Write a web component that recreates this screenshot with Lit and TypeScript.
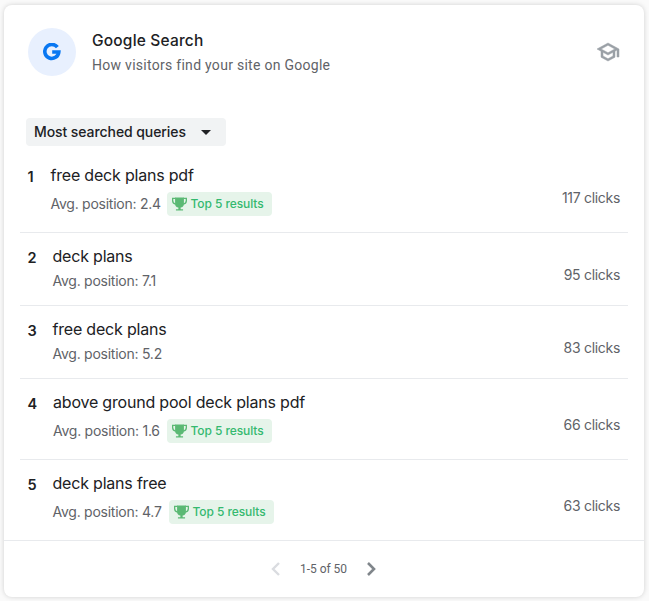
import { LitElement, html, css, svg } from "lit";
import { customElement } from "lit/decorators.js";

interface Query {
  title: string;
  position: string;
  clicks: number;
  top: boolean;
  indent: number;
  gap: number;
}

const QUERIES: Query[] = [
  { title: "free deck plans pdf", position: "2.4", clicks: 117, top: true, indent: 23, gap: 116 },
  { title: "deck plans", position: "7.1", clicks: 95, top: false, indent: 25, gap: 0 },
  { title: "free deck plans", position: "5.2", clicks: 83, top: false, indent: 25, gap: 0 },
  { title: "above ground pool deck plans pdf", position: "1.6", clicks: 66, top: true, indent: 25.5, gap: 113.5 },
  { title: "deck plans free", position: "4.7", clicks: 63, top: true, indent: 25, gap: 116 },
];

const trophy = svg`<path d="M3.300 0h9.400v7.200a4.500 4 0 0 1-3.500 3.600v1.800h2.600V14H4.200v-1.400h2.600v-1.800a4.500 4 0 0 1-3.500-3.600z"/><path d="M4 1H.7v2.500c0 2 1.300 3.300 3.300 3.600M12 1h3.300v2.500c0 2-1.300 3.300-3.300 3.600" fill="none" stroke="#5bb974" stroke-width="1.400"/>`;

@customElement("app-root")
export class AppRoot extends LitElement {
  static styles = css`
    :host { display: block; box-sizing: border-box; height: 601px; padding: 5px 5px 4px 4px; background: #fafafa;
      font-family: Inter, "Liberation Sans", sans-serif; color: #202124; overflow: hidden; }
    .card { display: flex; flex-direction: column; height: 592px; background: #fff; border-radius: 8px;
      box-shadow: 0 0 5px rgba(0, 0, 0, .17); white-space: nowrap; }
    header { display: flex; align-items: center; height: 48px; padding: 23px 24px 0; }
    .logo { width: 48px; height: 48px; border-radius: 50%; background: #e8f0fe; display: grid; place-items: center; margin-right: 16px; }
    .heading { flex: 1; padding-top: 2px; }
    .name { font-size: 15.500px; font-weight: 500; line-height: 24px; letter-spacing: .18px; }
    .desc { font: 14px/24px Roboto, sans-serif; letter-spacing: .28px; color: #5f6368; }
    svg { display: block; }
    .filter { align-self: flex-start; box-sizing: border-box; width: 200px; height: 28px; margin: 42px 0 6px 22px; padding: 0 15px 0 8px;
      display: flex; align-items: center; justify-content: space-between; border: 0; border-radius: 4px;
      background: #f1f3f4; color: #202124; font: 500 14px/28px Inter, sans-serif; letter-spacing: -.08px; }
    .rows { padding: 0 16px; }
    .row { display: flex; align-items: center; padding: 12px 8px 16px 7.500px; border-bottom: 1px solid #e8eaed; }
    .row:last-child { border-bottom: 0; }
    .num { align-self: flex-start; font-size: 14.500px; font-weight: 600; line-height: 25px; }
    .info { flex: 1; }
    .title { font-size: 16px; line-height: 22px; margin-bottom: 6px; letter-spacing: -.2px; }
    .sub { display: flex; align-items: center; height: 16px; font-size: 14px; line-height: 16px; letter-spacing: -.25px; color: #5f6368; }
    .label { padding-bottom: 0; }
    .tagged { height: 24px; }
    .tag { display: flex; align-items: center; box-sizing: border-box; width: 105.500px; height: 24px; padding-left: 5px; gap: 4px;
      border-radius: 4px; background: #e6f4ea; color: #34b96f; font-size: 12px; font-weight: 500; letter-spacing: -.08px; }
    .result { padding-bottom: 1px; }
    .clicks { padding-top: 16px; font-size: 14px; line-height: 20px; letter-spacing: -.3px; color: #5f6368; }
    footer { flex: 1; display: flex; align-items: center; justify-content: center; gap: 20px; padding-right: 1px; border-top: 1px solid #e8eaed;
      font: 12px/16px Roboto, sans-serif; letter-spacing: -.05px; color: #5f6368; }
  `;

  private row(q: Query, i: number) {
    return html`<div class="row">
      <div class="num" style="width:${q.indent}px">${i + 1}</div>
      <div class="info">
        <div class="title">${q.title}</div>
        <div class="sub ${q.top ? "tagged" : ""}">
          <span class="label" style=${q.top ? `width:${q.gap}px` : ""}>Avg. position: ${q.position}</span>
          ${q.top ? html`<span class="tag"><svg width="15" height="14" viewBox="0 0 16 14" fill="#5bb974">${trophy}</svg><span class="result">Top 5 results</span></span>` : ""}
        </div>
      </div>
      <div class="clicks">${q.clicks} clicks</div>
    </div>`;
  }

  render() {
    return html`<section class="card">
      <header>
        <div class="logo"><svg width="18" height="18" viewBox="0 0 18 18" fill="none" stroke="#0877f2" stroke-width="3.600"><path d="M14.400 4.200A7 7 0 1 0 15.800 9H9.200"/></svg></div>
        <div class="heading"><div class="name">Google Search</div><div class="desc">How visitors find your site on Google</div></div>
        <svg width="24" height="24" viewBox="0 0 24 24" fill="#9aa0a6" stroke="#9aa0a6" stroke-width=".5"><path fill-rule="evenodd" d="M12 3 1 9l4 2.180v6L12 21l7-3.820v-6l2-1.090V17h2V9zm6.820 6L12 12.720 5.180 9 12 5.280zM17 16l-5 2.720L7 16v-3.730L12 15l5-2.730z"/></svg>
      </header>
      <button class="filter">Most searched queries<svg width="10" height="5" viewBox="0 0 10 5"><path d="M0 0h10L5 5z" fill="#202124"/></svg></button>
      <div class="rows">${QUERIES.map((q, i) => this.row(q, i))}</div>
      <footer>
        <svg width="9" height="14" viewBox="0 0 9 14" fill="none" stroke="#dadce0" stroke-width="2.400"><path d="M8 1 2 7l6 6"/></svg>
        <span>1-5 of 50</span>
        <svg width="9" height="14" viewBox="0 0 9 14" fill="none" stroke="#80868b" stroke-width="2.600"><path d="m1 1 6 6-6 6"/></svg>
      </footer>
    </section>`;
  }
}
